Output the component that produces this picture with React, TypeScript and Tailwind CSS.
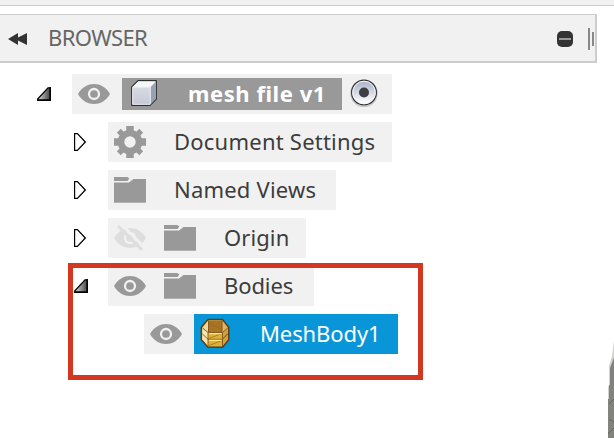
import type { ReactNode } from "react";

function Eye() {
  return (
    <svg className="h-5 w-8 shrink-0" viewBox="0 0 32 20">
      <path d="M0 10C4 3 10 0 16 0s12 3 16 10c-4 7-10 10-16 10S4 17 0 10Z" fill="#999" />
      <circle cx="16" cy="10" r="5" fill="#999" stroke="#f1f1f1" strokeWidth="2.3" />
    </svg>
  );
}

function HiddenEye() {
  return (
    <svg className="h-[26px] w-8 shrink-0" viewBox="0 0 32 26">
      <path d="M0 13C4 6 10 3 16 3s12 3 16 10c-4 7-10 10-16 10S4 20 0 13Z" fill="#dedede" />
      <circle cx="16" cy="13" r="5" fill="#dedede" stroke="#f1f1f1" strokeWidth="2.4" />
      <path d="M7-1 32 24" stroke="#f1f1f1" strokeWidth="3" />
      <path d="M4 1 28 25" stroke="#dedede" strokeWidth="2.8" />
    </svg>
  );
}

function Folder() {
  return (
    <svg className="h-[26px] w-8 shrink-0" viewBox="0 0 32 26">
      <path d="M0 0h13.500l1.800 1.500L13.500 4H0ZM0 5.500h15L19.500 2H32v24H0Z" fill="#999" />
      <path d="M0 25.500h32" stroke="#b3b3b3" />
    </svg>
  );
}

function Gear() {
  return (
    <svg className="size-8 shrink-0" viewBox="0 0 32 32">
      <g stroke="#999" strokeWidth="7.500">
        <path d="M16 0v8M16 24v8M0 16h8M24 16h8" />
        <path d="m4.800 4.800 6 6M21.200 21.200l6 6M27.200 4.800l-6 6M10.800 21.200l-6 6" strokeWidth="5.500" />
      </g>
      <circle cx="16" cy="16" r="9" fill="none" stroke="#999" strokeWidth="6.600" />
    </svg>
  );
}

function Cube() {
  return (
    <svg className="-mt-[3px] h-7 w-7 shrink-0" viewBox="0 0 28 28">
      <defs>
        <linearGradient id="cubeFront" x2="0" y2="1">
          <stop stopColor="#dfe1e7" />
          <stop offset="1" stopColor="#c5c9d4" />
        </linearGradient>
      </defs>
      <path d="M1.700 8 8 1.700h18.300V20L20 26.300H1.700Z" fill="url(#cubeFront)" stroke="#303030" strokeWidth="1.200" strokeLinejoin="round" />
      <path d="M2.500 8 8.200 2.400h17.300L20.500 8Z" fill="#f7f8fa" />
      <path d="m20.800 8 4.900-5v17l-4.900 5.200Z" fill="#98a1b3" />
      <path d="M2.700 25.300V8.200h17.500v17.100Z" fill="none" stroke="#edf0f5" strokeWidth=".9" />
    </svg>
  );
}

function Radio() {
  return (
    <svg className="-mt-0.5 h-7 w-7 shrink-0" viewBox="0 0 28 28">
      <defs>
        <linearGradient id="radioFace" x2="0" y2="1">
          <stop stopColor="#a6aec3" />
          <stop offset=".9" stopColor="#fafbfc" />
        </linearGradient>
      </defs>
      <circle cx="14" cy="14.500" r="13" fill="none" stroke="#c6c6c6" strokeWidth="1.500" />
      <circle cx="14" cy="13.500" r="12.400" fill="url(#radioFace)" stroke="#333" strokeWidth="1.200" />
      <circle cx="14" cy="13.500" r="11.300" fill="none" stroke="#f5f6f9" />
      <circle cx="14" cy="13.500" r="5" fill="#3d3d42" />
    </svg>
  );
}

function MeshIcon() {
  return (
    <svg className="-mt-0.5 size-[30px] shrink-0" viewBox="0 0 30 30">
      <path d="M8 1.500h14.500l6.200 7.800v12.500L22.500 29.200H8l-6.700-7.400V9.300Z" fill="#d8ae45" stroke="#5c3e16" strokeWidth="1.500" strokeLinejoin="round" />
      <path d="M8.500 2.800H22v11.500H8.500Z" fill="#a87424" />
      <path d="M8 3v11L2.500 9.800Z" fill="#efd99b" />
      <path d="M22.500 3v11l5-4.200Z" fill="#dcb667" />
      <path d="M2.300 10 8 14.500v13.300l-5.700-6.500Z" fill="#f5e5b0" />
      <path d="m27.700 10-5.200 4.500v13.300l5.200-6.500Z" fill="#cfa144" />
      <path d="M8 14.500h14.500V28H8Z" fill="#deb03b" />
      <path d="M8.500 2.500v11.500M22 2.500v11.500M2.500 10 8 14.500h14.500l5.200-4.500M8 14.500V28M22.500 14.500V28M2.500 16 8 21.300h14.500l5.200-5.300" fill="none" stroke="#805519" strokeWidth=".9" />
      <path d="m9 5 13 7M9 20.500l13-5M9 27.500l13-5M23 21l4.500-6" fill="none" stroke="#956822" strokeWidth=".7" />
      <path d="M9 15.700h12.700M9 22.300h12.700" stroke="#ffe57c" strokeWidth="1.300" />
    </svg>
  );
}

function Arrow({ open = false }: { open?: boolean }) {
  return open ? (
    <svg className="h-[14px] w-[14px] shrink-0" viewBox="0 0 14 14">
      <defs>
        <linearGradient id="arrowFill">
          <stop stopColor="#ddd" />
          <stop offset="1" stopColor="#444" />
        </linearGradient>
      </defs>
      <path d="M.7 12 11 .8h2.200V13H.7Z" fill="url(#arrowFill)" stroke="#000" strokeWidth="1.200" />
      <path d="M0 13.300h13.300V0" fill="none" stroke="#000" strokeWidth="1.400" />
    </svg>
  ) : (
    <svg className="h-[18px] w-3 shrink-0" viewBox="0 0 12 18">
      <path d="M.6.6h2.800L11.300 9l-7.900 8.400H.6Z" fill="#fff" stroke="#000" strokeWidth="1.200" />
    </svg>
  );
}

function Row({ arrow, children, width }: { arrow?: ReactNode; children: ReactNode; width: string }) {
  return (
    <div className="flex h-10 items-center">
      <div className="flex w-[34px] shrink-0 items-center">{arrow}</div>
      <div className={`flex h-10 shrink-0 items-center bg-[#f1f1f1] ${width}`}>{children}</div>
    </div>
  );
}

export default function App() {
  return (
    <main className="relative h-[438px] w-[614px] overflow-hidden bg-white font-['Noto_Sans',sans-serif] text-[22px] leading-none whitespace-nowrap text-[#3c3c3c]">
      <div className="h-1.5 border-b border-[#ccc] bg-[#f1f1f1]" />
      <header className="mt-2 flex h-[49px] w-[597px] items-center border-t border-r-2 border-b-2 border-[#ccc] bg-[#f1f1f1] pl-2">
        <svg className="mt-px h-3 w-[19px]" viewBox="0 0 19 12">
          <path d="m0 6 10-6v4.500L19 0v12l-9-4.500V12Z" fill="#333" />
        </svg>
        <span className="ml-[21px] pb-0.5 tracking-[-0.6px] text-[#666]">BROWSER</span>
        <svg className="mt-px ml-auto h-4 w-4" viewBox="0 0 16 16">
          <rect width="16" height="16" rx="5" fill="#333" />
          <path d="M2 8h12" stroke="#999" strokeWidth="2" />
        </svg>
        <div className="mt-px ml-[15px] h-[22px] w-0.5 bg-[#888]" />
        <div className="mt-px mr-[1px] ml-0.5 h-3.5 w-0.5 bg-[#888]" />
      </header>

      <div className="mt-[11px] flex flex-col gap-2">
        <div className="pl-[37px]">
          <Row arrow={<Arrow open />} width="ml-px w-[320px] pl-1.5">
            <Eye />
            <div className="ml-3 flex h-8 w-[220px] items-center bg-[#999] pl-2 font-bold text-white">
              <Cube />
              <span className="ml-[30px] pb-0.5 tracking-[0.55px]">mesh file v1</span>
            </div>
            <div className="ml-2"><Radio /></div>
          </Row>
        </div>
        <div className="flex flex-col gap-2 pl-[74px]">
          <Row arrow={<Arrow />} width="w-[284px] pl-1.5">
            <Gear />
            <span className="ml-7 pb-0.5 tracking-[0.23px]">Document Settings</span>
          </Row>
          <Row arrow={<Arrow />} width="w-[228px] pl-1.5">
            <Folder />
            <span className="ml-7 pb-0.5 tracking-[0.2px]">Named Views</span>
          </Row>
          <Row arrow={<Arrow />} width="w-[198px] pl-1.5">
            <HiddenEye />
            <div className="ml-[18px]"><Folder /></div>
            <span className="ml-7 pb-0.5 tracking-[0.1px]">Origin</span>
          </Row>
          <Row arrow={<Arrow open />} width="w-[206px] pl-1.5">
            <Eye />
            <div className="ml-[18px]"><Folder /></div>
            <span className="ml-7 pb-0.5 tracking-[-0.1px]">Bodies</span>
          </Row>
        </div>
        <div className="pl-[110px]">
          <Row width="w-[254px] pl-1.5">
            <Eye />
            <div className="ml-3 flex h-10 w-[204px] items-center bg-[#0996d9] pl-1.5 text-white">
              <MeshIcon />
              <span className="ml-[30px] pb-0.5 tracking-[-0.1px]">MeshBody1</span>
            </div>
          </Row>
        </div>
      </div>

      <div className="absolute top-[263px] left-[68px] h-[117px] w-[355px] border-5 border-[#d43720]" />
      <svg className="absolute top-[340px] right-0 h-[98px] w-2" viewBox="0 0 8 98">
        <path d="M8 0v98H2V46h1V26l3-10Z" fill="#d2d3d1" />
        <path d="M8 18v80H2V59h1V45h1V28l3-8Z" fill="#81837c" />
        <path d="m3 64 5-5M3 79l5 3M2 94l6-6" stroke="#65685f" />
      </svg>
    </main>
  );
}
